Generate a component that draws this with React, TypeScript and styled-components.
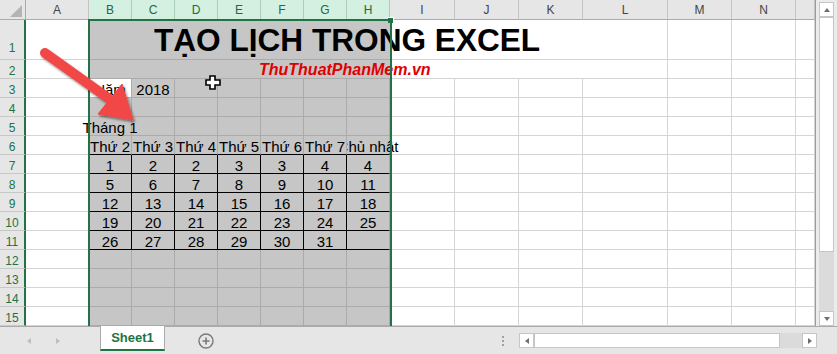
import React from "react";
import styled, { createGlobalStyle, css } from "styled-components";

const GREEN = "#217346";

const GlobalStyle = createGlobalStyle`
  html, body {
    margin: 0;
    padding: 0;
    background: #fff;
  }
  body {
    width: 837px;
    height: 354px;
    overflow: hidden;
    font-family: "Liberation Sans", Arial, sans-serif;
  }
`;

interface ColDef {
  n: string;
  w: number;
  sel?: boolean;
}

const colDefs: ColDef[] = [
  { n: "A", w: 63 },
  ...["B", "C", "D", "E", "F", "G", "H"].map((n) => ({ n, w: 43, sel: true })),
  { n: "I", w: 65 },
  { n: "J", w: 64 },
  { n: "K", w: 64 },
  { n: "L", w: 85 },
  { n: "M", w: 64 },
  { n: "N", w: 64 },
  { n: "", w: 19 },
];

const gridCols = "26px " + colDefs.map((c) => c.w + "px").join(" ");

const weekdays = ["Thứ 2", "Thứ 3", "Thứ 4", "Thứ 5", "Thứ 6", "Thứ 7", "Chủ nhật"];
const calendar = [
  ["1", "2", "2", "3", "3", "4", "4"],
  ["5", "6", "7", "8", "9", "10", "11"],
  ["12", "13", "14", "15", "16", "17", "18"],
  ["19", "20", "21", "22", "23", "24", "25"],
  ["26", "27", "28", "29", "30", "31", ""],
];

const Window = styled.div`
  width: 837px;
  height: 354px;
  display: flex;
  flex-direction: column;
  background: #e6e6e6;
`;

const Main = styled.div`
  display: flex;
  height: 326px;
`;

const Sheet = styled.div`
  position: relative;
  width: 816px;
  height: 326px;
  box-sizing: border-box;
  border-right: 1px solid #9c9c9c;
  overflow: hidden;
  background: #fff;
`;

const Grid = styled.div`
  display: grid;
  grid-template-columns: ${gridCols};
  grid-template-rows: 20px 40px repeat(14, 19px);
`;

const Corner = styled.div`
  position: relative;
  box-sizing: border-box;
  background: #e6e6e6;
  border-right: 1px solid #ababab;
  border-bottom: 1px solid #ababab;
  &::after {
    content: "";
    position: absolute;
    left: 10px;
    top: 5px;
    width: 12px;
    height: 12px;
    background: #b4b4b4;
    clip-path: polygon(100% 0, 100% 100%, 0 100%);
  }
`;

const ColHead = styled.div<{ $sel?: boolean }>`
  box-sizing: border-box;
  display: flex;
  align-items: center;
  justify-content: center;
  background: ${(p) => (p.$sel ? "#d3f0e0" : "#e6e6e6")};
  color: ${(p) => (p.$sel ? "#1d6b40" : "#444")};
  border-right: 1px solid ${(p) => (p.$sel ? "#a9cfb9" : "#c3c3c3")};
  border-bottom: 1px solid #ababab;
  font-size: 12px;
`;

const RowHead = styled.div<{ $tall?: boolean }>`
  box-sizing: border-box;
  display: flex;
  justify-content: center;
  align-items: flex-end;
  padding-bottom: ${(p) => (p.$tall ? 5 : 1)}px;
  background: #e6e6e6;
  border-right: 2px solid ${GREEN};
  border-bottom: 1px solid #c8c8c8;
  color: ${GREEN};
  font-size: 12px;
  line-height: 12px;
`;

const Cell = styled.div<{
  $sel?: boolean;
  $active?: boolean;
  $bottomBlack?: boolean;
  $rightBlack?: boolean;
  $clipLeft?: boolean;
}>`
  position: relative;
  box-sizing: border-box;
  display: flex;
  justify-content: center;
  align-items: flex-start;
  background: ${(p) => (p.$sel && !p.$active ? "#c6c6c6" : "#fff")};
  border-right: 1px solid
    ${(p) => (p.$rightBlack ? "#000" : p.$sel ? "#ababab" : "#d4d4d4")};
  border-bottom: 1px solid
    ${(p) => (p.$bottomBlack ? "#000" : p.$sel ? "#ababab" : "#d4d4d4")};
  color: #000;
  font-size: 15px;
  line-height: 22px;
  white-space: nowrap;
  ${(p) =>
    p.$clipLeft &&
    css`
      clip-path: inset(0 -80px 0 0);
      z-index: 2;
    `}
`;

const Txt = styled.span`
  position: relative;
  z-index: 1;
  flex: none;
`;

const Merged = styled.div`
  grid-column: span 11;
  box-sizing: border-box;
  border-style: solid;
  border-width: 0 1px 1px 0;
  border-image: linear-gradient(to right, #ababab 301px, #d4d4d4 301px) 1;
  background: linear-gradient(to right, #c6c6c6 301px, #fff 301px);
  white-space: nowrap;
  overflow: hidden;
`;

const Title = styled.div`
  padding-left: 65px;
  font-size: 31.6px;
  font-weight: bold;
  line-height: 40px;
  color: #000;
`;

const Brand = styled.div`
  padding-left: 170px;
  font-size: 16px;
  font-weight: bold;
  font-style: italic;
  line-height: 19px;
  color: #e00000;
`;

const Selection = styled.div`
  position: absolute;
  left: 88px;
  top: 19px;
  width: 304px;
  height: 400px;
  box-sizing: border-box;
  border: 2px solid ${GREEN};
  border-bottom: none;
  pointer-events: none;
  z-index: 3;
`;

const Handle = styled.div`
  position: absolute;
  left: 388px;
  top: 17px;
  width: 5px;
  height: 5px;
  background: ${GREEN};
  border-top: 1px solid #fff;
  border-right: 1px solid #fff;
  z-index: 4;
`;

const Overlay = styled.svg`
  position: absolute;
  z-index: 5;
  pointer-events: none;
`;

const VScroll = styled.div`
  width: 21px;
  height: 326px;
  box-sizing: border-box;
  padding: 2px 3px 0 3px;
  display: flex;
  flex-direction: column;
  background: #ececec;
`;

const ScrollBtn = styled.div`
  width: 15px;
  height: 15px;
  flex: none;
  box-sizing: border-box;
  background: #fff;
  border: 1px solid #c6c6c6;
  display: flex;
  align-items: center;
  justify-content: center;
`;

const Tri = styled.div<{ $dir: "up" | "down" | "left" | "right"; $color?: string }>`
  width: 0;
  height: 0;
  ${(p) => {
    const c = p.$color ?? "#6f6f6f";
    switch (p.$dir) {
      case "up":
        return css`
          border-left: 3.5px solid transparent;
          border-right: 3.5px solid transparent;
          border-bottom: 4px solid ${c};
        `;
      case "down":
        return css`
          border-left: 3.5px solid transparent;
          border-right: 3.5px solid transparent;
          border-top: 4px solid ${c};
        `;
      case "left":
        return css`
          border-top: 3.5px solid transparent;
          border-bottom: 3.5px solid transparent;
          border-right: 4px solid ${c};
        `;
      default:
        return css`
          border-top: 3.5px solid transparent;
          border-bottom: 3.5px solid transparent;
          border-left: 4px solid ${c};
        `;
    }
  }}
`;

const Thumb = styled.div<{ $size: number; $horizontal?: boolean }>`
  flex: none;
  box-sizing: border-box;
  background: #fff;
  border: 1px solid #c6c6c6;
  ${(p) => (p.$horizontal ? `width: ${p.$size}px;` : `height: ${p.$size}px;`)}
`;

const Track = styled.div`
  flex: 1;
  background: #dbdbdb;
`;

const TabBar = styled.div`
  height: 28px;
  box-sizing: border-box;
  border-top: 1px solid #ababab;
  display: flex;
  align-items: center;
  background: #e6e6e6;
`;

const NavArea = styled.div`
  width: 100px;
  display: flex;
  align-items: center;
  gap: 25px;
  padding-left: 27px;
  box-sizing: border-box;
`;

const Tab = styled.div`
  align-self: flex-start;
  margin-top: -1px;
  width: 65px;
  height: 25px;
  box-sizing: border-box;
  background: #fff;
  border-left: 1px solid #ababab;
  border-right: 1px solid #ababab;
  border-bottom: 2px solid ${GREEN};
  display: flex;
  align-items: center;
  justify-content: center;
  color: ${GREEN};
  font-size: 13px;
  font-weight: bold;
  padding-bottom: 1px;
`;

const AddSheet = styled.svg`
  margin-left: 33px;
  flex: none;
`;

const Spacer = styled.div`
  flex: 1;
`;

const Divider = styled.div`
  width: 2px;
  height: 10px;
  margin-right: 15px;
  background: repeating-linear-gradient(#a0a0a0 0 2px, transparent 2px 4px);
`;

const HScroll = styled.div`
  width: 298px;
  height: 15px;
  margin-right: 20px;
  display: flex;
`;

function cellContent(r: number, ci: number) {
  // ci: 1..7 => B..H
  if (r === 3 && ci === 1) return "Năm";
  if (r === 3 && ci === 2) return "2018";
  if (r === 5 && ci === 1) return "Tháng 1";
  if (r === 6 && ci >= 1 && ci <= 7) return weekdays[ci - 1];
  if (r >= 7 && r <= 11 && ci >= 1 && ci <= 7) return calendar[r - 7][ci - 1];
  return "";
}

function SheetRow({ r }: { r: number }) {
  const head = <RowHead $tall={r === 1}>{r}</RowHead>;
  if (r === 1 || r === 2) {
    return (
      <>
        {head}
        <Cell />
        <Merged>
          {r === 1 ? <Title>TẠO LỊCH TRONG EXCEL</Title> : <Brand>ThuThuatPhanMem.vn</Brand>}
        </Merged>
        <Cell />
        <Cell />
        <Cell />
      </>
    );
  }
  return (
    <>
      {head}
      {colDefs.map((c, ci) => {
        const text = cellContent(r, ci);
        const inCal = c.sel && r >= 7 && r <= 11;
        return (
          <Cell
            key={ci}
            $sel={c.sel}
            $active={r === 3 && ci === 1}
            $bottomBlack={c.sel && r >= 6 && r <= 11}
            $rightBlack={inCal && ci < 7}
            $clipLeft={r === 6 && ci === 7}
          >
            {text && <Txt>{text}</Txt>}
          </Cell>
        );
      })}
    </>
  );
}

export default function App() {
  const rows = Array.from({ length: 15 }, (_, i) => i + 1);
  return (
    <>
      <GlobalStyle />
      <Window>
        <Main>
          <Sheet>
            <Grid>
              <Corner />
              {colDefs.map((c, i) => (
                <ColHead key={i} $sel={c.sel}>
                  {c.n}
                </ColHead>
              ))}
              {rows.map((r) => (
                <SheetRow key={r} r={r} />
              ))}
            </Grid>
            <Selection />
            <Handle />
            <Overlay
              width="120"
              height="100"
              viewBox="25 35 120 100"
              style={{ left: 25, top: 35 }}
            >
              <defs>
                <filter id="sh" x="-20%" y="-20%" width="140%" height="140%">
                  <feDropShadow dx="1.5" dy="2" stdDeviation="1.2" floodColor="#000" floodOpacity="0.45" />
                </filter>
              </defs>
              <g filter="url(#sh)" fill="#f24646" stroke="#f24646">
                <line x1="45" y1="53" x2="108" y2="98" strokeWidth="10" strokeLinecap="round" />
                <polygon points="98,114 133,120 122,84" strokeWidth="1" strokeLinejoin="round" />
              </g>
            </Overlay>
            <Overlay width="18" height="18" viewBox="0 0 18 18" style={{ left: 204, top: 74 }}>
              <polygon
                points="6,2 11,2 11,6 16,6 16,11 11,11 11,15 6,15 6,11 2,11 2,6 6,6"
                fill="#fff"
                stroke="#000"
                strokeWidth="1.6"
              />
            </Overlay>
          </Sheet>
          <VScroll>
            <ScrollBtn>
              <Tri $dir="up" />
            </ScrollBtn>
            <Thumb $size={235} />
            <Track />
            <ScrollBtn>
              <Tri $dir="down" />
            </ScrollBtn>
          </VScroll>
        </Main>
        <TabBar>
          <NavArea>
            <Tri $dir="left" $color="#bdbdbd" />
            <Tri $dir="right" $color="#bdbdbd" />
          </NavArea>
          <Tab>Sheet1</Tab>
          <AddSheet width="16" height="16" viewBox="0 0 16 16">
            <circle cx="8" cy="8" r="7" fill="none" stroke="#7a7a7a" strokeWidth="1.4" />
            <path d="M8 4.5v7M4.5 8h7" stroke="#7a7a7a" strokeWidth="1.6" />
          </AddSheet>
          <Spacer />
          <Divider />
          <HScroll>
            <ScrollBtn>
              <Tri $dir="left" />
            </ScrollBtn>
            <Thumb $size={246} $horizontal />
            <Track />
            <ScrollBtn>
              <Tri $dir="right" />
            </ScrollBtn>
          </HScroll>
        </TabBar>
      </Window>
    </>
  );
}
